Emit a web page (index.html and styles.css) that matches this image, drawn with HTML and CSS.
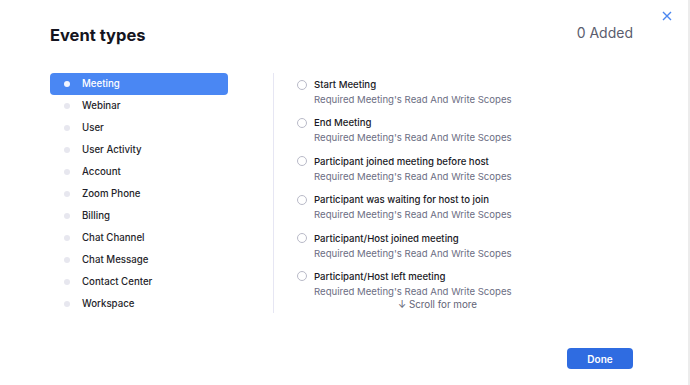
FILE: index.html
```html
<!DOCTYPE html>
<html lang="en">
<head>
<meta charset="utf-8">
<title>Event types</title>
<link rel="stylesheet" href="styles.css">
</head>
<body>
<div class="page">
  <div class="modal">
    <button class="close" aria-label="Close">
      <svg width="10" height="10" viewBox="0 0 10 10"><path d="M1 1L9 9M9 1L1 9" stroke="#4a86f0" stroke-width="1.4" fill="none"/></svg>
    </button>
    <div class="header">
      <h1 class="title">Event types</h1>
      <div class="added">0 Added</div>
    </div>
    <div class="body">
      <ul class="cats">
        <li class="cat active"><span class="dot"></span>Meeting</li>
        <li class="cat"><span class="dot"></span>Webinar</li>
        <li class="cat"><span class="dot"></span>User</li>
        <li class="cat"><span class="dot"></span>User Activity</li>
        <li class="cat"><span class="dot"></span>Account</li>
        <li class="cat"><span class="dot"></span>Zoom Phone</li>
        <li class="cat"><span class="dot"></span>Billing</li>
        <li class="cat"><span class="dot"></span>Chat Channel</li>
        <li class="cat"><span class="dot"></span>Chat Message</li>
        <li class="cat"><span class="dot"></span>Contact Center</li>
        <li class="cat"><span class="dot"></span>Workspace</li>
      </ul>
      <div class="events">
        <ul class="event-list">
          <li class="event"><span class="check"></span><div class="ev-text"><div class="ev-title">Start Meeting</div><div class="ev-sub">Required Meeting's Read And Write Scopes</div></div></li>
          <li class="event"><span class="check"></span><div class="ev-text"><div class="ev-title">End Meeting</div><div class="ev-sub">Required Meeting's Read And Write Scopes</div></div></li>
          <li class="event"><span class="check"></span><div class="ev-text"><div class="ev-title">Participant joined meeting before host</div><div class="ev-sub">Required Meeting's Read And Write Scopes</div></div></li>
          <li class="event"><span class="check"></span><div class="ev-text"><div class="ev-title">Participant was waiting for host to join</div><div class="ev-sub">Required Meeting's Read And Write Scopes</div></div></li>
          <li class="event"><span class="check"></span><div class="ev-text"><div class="ev-title">Participant/Host joined meeting</div><div class="ev-sub">Required Meeting's Read And Write Scopes</div></div></li>
          <li class="event"><span class="check"></span><div class="ev-text"><div class="ev-title">Participant/Host left meeting</div><div class="ev-sub">Required Meeting's Read And Write Scopes</div></div></li>
        </ul>
        <div class="more">↓ Scroll for more</div>
      </div>
    </div>
    <div class="footer">
      <button class="done">Done</button>
    </div>
  </div>
  <div class="scrollbar"></div>
</div>
</body>
</html>
```

FILE: styles.css
```css
* { box-sizing: border-box; }
html, body { margin: 0; padding: 0; background: #fff; }
body {
  font-family: Inter, "Noto Sans", sans-serif;
  color: #1f1f2b;
  width: 690px;
  height: 385px;
  overflow: hidden;
}
.page { display: flex; height: 385px; }
.modal {
  flex: 1;
  position: relative;
  padding: 25px 55px 0 50px;
}
.scrollbar { width: 2px; background: #ececec; }
.close {
  position: absolute;
  top: 11px;
  left: 662px;
  border: 0;
  background: none;
  padding: 0;
  width: 10px;
  height: 10px;
  display: flex;
}
.header {
  display: flex;
  justify-content: space-between;
  align-items: flex-start;
}
.title {
  margin: 0;
  font-size: 16.5px;
  line-height: 20px;
  font-weight: 700;
  color: #141420;
}
.added {
  font-size: 14px;
  line-height: 20px;
  margin-top: -2px;
  color: #5b5d6e;
}
.body {
  display: flex;
  margin-top: 28px;
  align-items: flex-start;
}
.cats {
  list-style: none;
  margin: 0 45px 0 0;
  padding: 0;
  width: 178px;
  flex: none;
}
.cat {
  height: 22px;
  line-height: 22px;
  font-size: 9.7px;
  font-weight: 500;
  display: flex;
  align-items: center;
  padding-left: 14px;
  border-radius: 4px;
  color: #1f1f2b;
}
.cat .dot {
  width: 6px;
  height: 6px;
  border-radius: 50%;
  background: #e7e7ef;
  margin-right: 12px;
  flex: none;
}
.cat.active { background: #4a87f3; color: #fff; }
.cat.active .dot { background: #f2f5ff; }
.events {
  position: relative;
  width: 328px;
  height: 240px;
  overflow: hidden;
  border-left: 1px solid #e6e6f3;
  padding: 4px 0 0 23px;
  flex: none;
}
.event-list { list-style: none; margin: 0; padding: 0; }
.event {
  display: flex;
  align-items: flex-start;
  margin-bottom: 8.4px;
}
.check {
  width: 10px;
  height: 10px;
  border: 1px solid #b9bac8;
  border-radius: 50%;
  margin-top: 2.5px;
  margin-right: 7px;
  flex: none;
}
.ev-title {
  font-size: 9.6px;
  line-height: 15px;
  font-weight: 500;
  color: #1a1a26;
}
.ev-sub {
  font-size: 9.6px;
  line-height: 15px;
  color: #6c6e83;
}
.more {
  position: absolute;
  left: 0;
  right: 0;
  bottom: 0;
  padding: 1px 0 2px;
  line-height: 12px;
  font-size: 9.8px;
  text-align: center;
  color: #626476;
  background: rgba(255,255,255,0.9);
}
.footer {
  display: flex;
  justify-content: flex-end;
  margin-top: 33px;
}
.done {
  width: 66px;
  height: 21px;
  border: 0;
  border-radius: 4px;
  background: #2f6ce1;
  color: #fff;
  font-family: inherit;
  font-size: 10px;
  font-weight: 600;
  padding: 0;
}
```
